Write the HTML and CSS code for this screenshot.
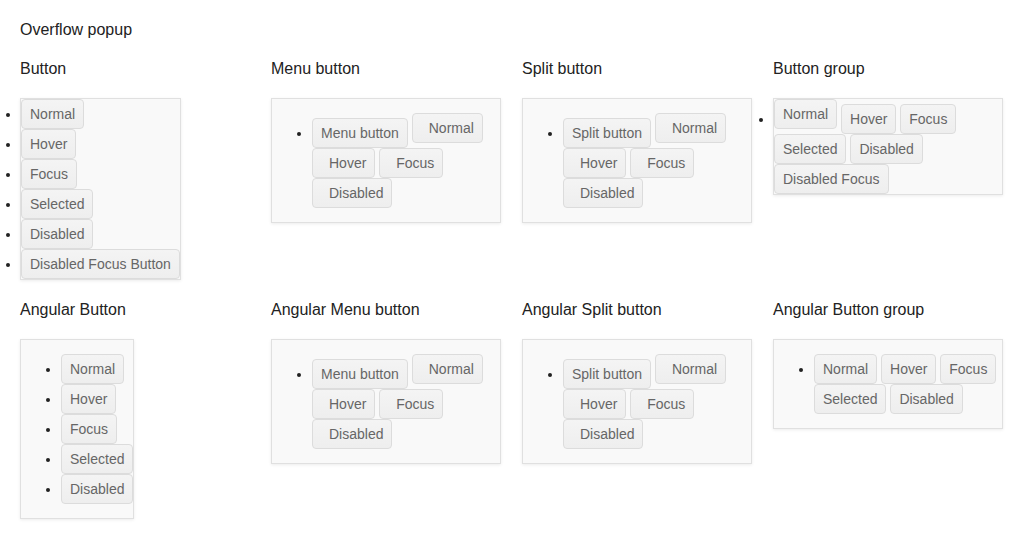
FILE: index.html
```html
<!DOCTYPE html>
<html>
<head>
<meta charset="utf-8">
<link rel="stylesheet" href="styles.css">
</head>
<body>
<div class="page">
  <div class="page-title">Overflow popup</div>
  <div class="grid">
    <section class="cell">
      <div class="cell-title">Button</div>
      <div class="popup">
        <ul class="list-flush">
          <li><button class="btn">Normal</button></li>
          <li><button class="btn">Hover</button></li>
          <li><button class="btn">Focus</button></li>
          <li><button class="btn">Selected</button></li>
          <li><button class="btn">Disabled</button></li>
          <li><button class="btn">Disabled Focus Button</button></li>
        </ul>
      </div>
    </section>
    <section class="cell">
      <div class="cell-title">Menu button</div>
      <div class="popup">
        <ul class="list-indent">
          <li><button class="btn">Menu button</button> <button class="btn btn-icon raised">Normal</button> <button class="btn btn-icon raised">Hover</button> <button class="btn btn-icon raised">Focus</button> <button class="btn btn-icon raised">Disabled</button></li>
        </ul>
      </div>
    </section>
    <section class="cell">
      <div class="cell-title">Split button</div>
      <div class="popup">
        <ul class="list-indent">
          <li><button class="btn">Split button</button> <button class="btn btn-icon raised">Normal</button> <button class="btn btn-icon raised">Hover</button> <button class="btn btn-icon raised">Focus</button> <button class="btn btn-icon raised">Disabled</button></li>
        </ul>
      </div>
    </section>
    <section class="cell">
      <div class="cell-title">Button group</div>
      <div class="popup">
        <ul class="list-flush">
          <li><button class="btn raised">Normal</button> <button class="btn">Hover</button> <button class="btn">Focus</button> <button class="btn">Selected</button> <button class="btn">Disabled</button> <button class="btn">Disabled Focus</button></li>
        </ul>
      </div>
    </section>

    <section class="cell">
      <div class="cell-title">Angular Button</div>
      <div class="popup">
        <ul class="list-indent">
          <li><button class="btn">Normal</button></li>
          <li><button class="btn">Hover</button></li>
          <li><button class="btn">Focus</button></li>
          <li><button class="btn">Selected</button></li>
          <li><button class="btn">Disabled</button></li>
        </ul>
      </div>
    </section>
    <section class="cell">
      <div class="cell-title">Angular Menu button</div>
      <div class="popup">
        <ul class="list-indent">
          <li><button class="btn">Menu button</button> <button class="btn btn-icon raised">Normal</button> <button class="btn btn-icon raised">Hover</button> <button class="btn btn-icon raised">Focus</button> <button class="btn btn-icon raised">Disabled</button></li>
        </ul>
      </div>
    </section>
    <section class="cell">
      <div class="cell-title">Angular Split button</div>
      <div class="popup">
        <ul class="list-indent">
          <li><button class="btn">Split button</button> <button class="btn btn-icon raised">Normal</button> <button class="btn btn-icon raised">Hover</button> <button class="btn btn-icon raised">Focus</button> <button class="btn btn-icon raised">Disabled</button></li>
        </ul>
      </div>
    </section>
    <section class="cell">
      <div class="cell-title">Angular Button group</div>
      <div class="popup">
        <ul class="list-indent">
          <li><button class="btn">Normal</button> <button class="btn">Hover</button> <button class="btn">Focus</button> <button class="btn">Selected</button> <button class="btn">Disabled</button></li>
        </ul>
      </div>
    </section>
  </div>
</div>
</body>
</html>
```
FILE: styles.css
```css
html, body {
  margin: 0;
  padding: 0;
  background: #ffffff;
}

body {
  font-family: "Liberation Sans", Arial, sans-serif;
  color: #222222;
}

.page {
  padding: 21px 20px 20px;
}

.page-title {
  font-size: 16px;
  line-height: 18px;
  margin: 0 0 21px;
}

.grid {
  display: grid;
  grid-template-columns: repeat(4, 251px);
  row-gap: 21px;
  align-items: start;
}

.cell-title {
  font-size: 16px;
  line-height: 18px;
  margin-bottom: 20px;
}

.popup {
  box-sizing: border-box;
  width: fit-content;
  max-width: 230px;
  background: #f9f9f9;
  border: 1px solid #e0e0e0;
  box-shadow: 0 1px 3px rgba(0, 0, 0, 0.08);
  font-size: 14px;
  line-height: 16px;
}

.list-flush {
  margin: 0;
  padding: 0;
}

.list-indent {
  margin: 14px 0;
  padding: 0 0 0 40px;
}

.btn {
  display: inline-block;
  font-family: "Liberation Sans", Arial, sans-serif;
  font-size: 14px;
  line-height: 16px;
  color: #666666;
  padding: 6px 8px;
  border: 1px solid #dcdcdc;
  border-radius: 4px;
  background: linear-gradient(#f4f4f4, #eeeeee);
  margin: 0;
  vertical-align: baseline;
}

.btn-icon {
  padding-left: 16px;
}

.raised {
  vertical-align: 5px;
}
```
